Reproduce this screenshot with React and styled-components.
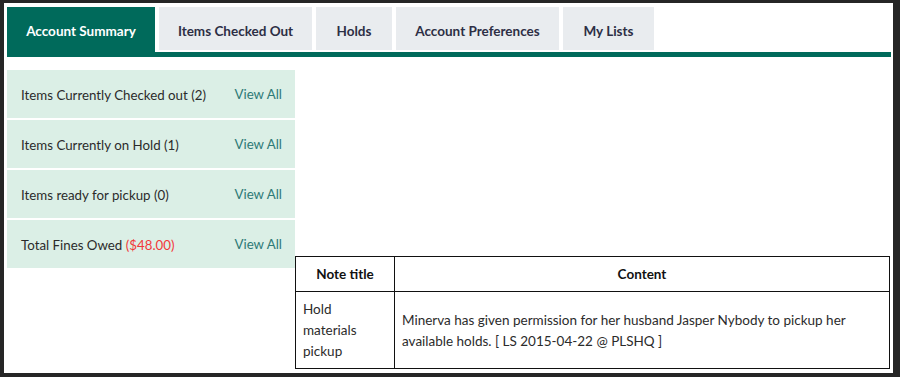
import styled, { createGlobalStyle } from "styled-components";

const Global = createGlobalStyle`
  html, body { margin: 0; padding: 0; background: #fff; }
  body { font-family: "Lato", "Open Sans", sans-serif; }
`

const Frame = styled.div`
  box-sizing: border-box;
  width: 900px;
  height: 377px;
  border-style: solid;
  border-color: #262626;
  border-width: 3px 7px 4px 4px;
  padding: 4px 2px 0 3px;
  background: #fff;
  overflow: hidden;
`
const TabBar = styled.nav`
  display: flex;
  align-items: flex-end;
  gap: 4px;
  border-bottom: 5px solid #006a5b;
`
const Tab = styled.div`
  box-sizing: border-box;
  width: ${p => p.w}px;
  height: ${p => (p.active ? 45 : 43)}px;
  margin-bottom: ${p => (p.active ? 0 : 2)}px;
  display: flex;
  align-items: center;
  justify-content: center;
  padding-top: ${p => (p.active ? 3 : 5)}px;
  font-size: 13.5px;
  font-weight: 700;
  color: ${p => (p.active ? "#fff" : "#2d2f45")};
  background: ${p => (p.active ? "#006a5b" : "#e9ecef")};
`
const Body = styled.div`
  display: flex;
  align-items: flex-start;
  padding-top: 13px;
`
const Summary = styled.ul`
  list-style: none;
  margin: 0;
  padding: 0;
  width: 288px;
  display: flex;
  flex-direction: column;
  gap: 2px;
`
const Row = styled.li`
  height: 48px;
  display: flex;
  align-items: center;
  justify-content: space-between;
  padding: 0 13px 0 14px;
  background: #dbefe6;
  font-size: 13.3px;
  color: #2b2b2b;
`
const Label = styled.span`
  padding-top: 1px;
`
const Fine = styled.span`
  color: #f2383a;
`
const ViewAll = styled.a`
  color: #2e7a77;
  font-size: 13.3px;
  text-decoration: none;
`
const Notes = styled.table`
  margin-top: 186px;
  width: 595px;
  border-collapse: collapse;
  font-size: 13.5px;
  color: #2b2b2b;
  th, td {
    border: 1px solid #111;
  }
  th {
    height: 34px;
    font-weight: 700;
    color: #111;
    text-align: center;
    padding: 0 6px;
  }
  td {
    padding: 7px 7px 6px;
    line-height: 21px;
    vertical-align: middle;
  }
`
const TitleCell = styled.td`
  && {
    width: 78px;
    padding-right: 13px;
  }
`

const tabs = [
  ["Account Summary", 148, true],
  ["Items Checked Out", 153],
  ["Holds", 76],
  ["Account Preferences", 163],
  ["My Lists", 91],
]

export default function App() {
  return (
    <>
      <Global />
      <Frame>
        <TabBar>
          {tabs.map(([label, w, active]) => (
            <Tab key={label} w={w} active={active}>{label}</Tab>
          ))}
        </TabBar>
        <Body>
          <Summary>
            <Row><Label>Items Currently Checked out (2)</Label><ViewAll href="#">View All</ViewAll></Row>
            <Row><Label>Items Currently on Hold (1)</Label><ViewAll href="#">View All</ViewAll></Row>
            <Row><Label>Items ready for pickup (0)</Label><ViewAll href="#">View All</ViewAll></Row>
            <Row><Label>Total Fines Owed <Fine>($48.00)</Fine></Label><ViewAll href="#">View All</ViewAll></Row>
          </Summary>
          <Notes>
            <thead>
              <tr><th>Note title</th><th>Content</th></tr>
            </thead>
            <tbody>
              <tr>
                <TitleCell>Hold materials pickup</TitleCell>
                <td>Minerva has given permission for her husband Jasper Nybody to pickup her available holds. [ LS 2015-04-22 @ PLSHQ ]</td>
              </tr>
            </tbody>
          </Notes>
        </Body>
      </Frame>
    </>
  )
}
